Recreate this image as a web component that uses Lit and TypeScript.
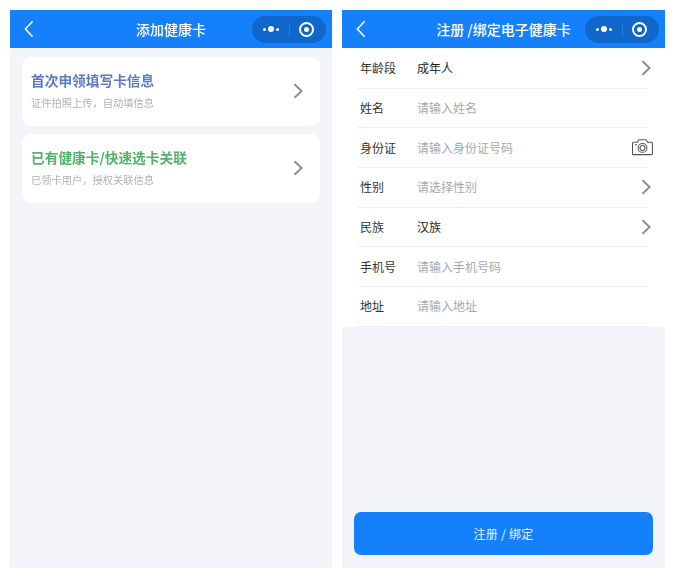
import { LitElement, html, css, svg } from "lit";
import { customElement } from "lit/decorators.js";

const chevron = (cls: string) => html`<svg class=${cls} viewBox="0 0 10 16" fill="none"><path d="M1.5 1.2 8.6 8 1.5 14.8" stroke="currentColor" stroke-width="1.9"/></svg>`;

const camera = html`<svg class="camera" viewBox="0 0 22 18" fill="none" stroke="#555" stroke-width="1.1">
  <path d="M1.5 4h4l1.6-2.6h7.6L16.4 4h4a1 1 0 0 1 1 1v11a1 1 0 0 1-1 1H1.5a1 1 0 0 1-1-1V5a1 1 0 0 1 1-1Z"/>
  <circle cx="11" cy="10" r="4.6"/><circle cx="11" cy="10" r="2.6"/>
  ${svg`<path d="M3 6.5h2"/>`}
</svg>`;

const capsule = html`<div class="capsule">
  <span class="dots"><i></i><i class="big"></i><i></i></span>
  <span class="divider"></span>
  <span class="target"><i></i></span>
</div>`;

const header = (title: string) => html`<header class="bar">
  <svg class="back" viewBox="0 0 10 18" fill="none"><path d="M8.6 1.2 1.4 9l7.2 7.8" stroke="#fff" stroke-width="1.5"/></svg>
  <div class="title">${title}</div>
  ${capsule}
</header>`;

interface Row { label: string; value: string; filled?: boolean; end?: "chevron" | "camera"; }

const rows: Row[] = [
  { label: "年龄段", value: "成年人", filled: true, end: "chevron" },
  { label: "姓名", value: "请输入姓名" },
  { label: "身份证", value: "请输入身份证号码", end: "camera" },
  { label: "性别", value: "请选择性别", end: "chevron" },
  { label: "民族", value: "汉族", filled: true, end: "chevron" },
  { label: "手机号", value: "请输入手机号码" },
  { label: "地址", value: "请输入地址" },
];

@customElement("app-root")
export class AppRoot extends LitElement {
  static styles = css`
    :host {
      display: block;
      width: 675px;
      height: 578px;
      background: #fff;
      font-family: "Noto Sans CJK SC", "Liberation Sans", sans-serif;
    }
    .page {
      display: flex;
      gap: 10px;
      padding: 10px;
      box-sizing: border-box;
      height: 578px;
      filter: blur(0.4px);
    }
    .phone {
      width: 322px;
      flex: none;
      display: flex;
      flex-direction: column;
      background: #f3f5fa;
    }
    .phone.right { width: 323px; }
    .bar {
      height: 38px;
      flex: none;
      background: #1580fb;
      display: grid;
      grid-template-columns: 1fr auto 1fr;
      align-items: center;
      padding: 0 6px 0 14px;
    }
    .back { width: 10px; height: 18px; }
    .title {
      color: #fff;
      font-size: 14px;
      font-weight: 500;
      white-space: nowrap;
      transform: translateX(-4px);
    }
    .capsule {
      width: 74px;
      height: 27px;
      border-radius: 14px;
      background: #0f66cb;
      display: flex;
      align-items: center;
      justify-self: end;
    }
    .dots { display: flex; align-items: center; gap: 2px; width: 37px; justify-content: center; padding-left: 1px; box-sizing: border-box; }
    .dots i { width: 3px; height: 3px; border-radius: 50%; background: #fff; }
    .dots i.big { width: 6px; height: 6px; }
    .divider { width: 1px; height: 15px; background: #2a78d6; }
    .target {
      width: 33px;
      display: flex;
      justify-content: center;
    }
    .target i {
      width: 15px;
      height: 15px;
      box-sizing: border-box;
      border: 2px solid #fff;
      border-radius: 50%;
      display: flex;
      align-items: center;
      justify-content: center;
    }
    .target i::after {
      content: "";
      width: 5px;
      height: 5px;
      border-radius: 50%;
      background: #fff;
    }
    .cards {
      display: flex;
      flex-direction: column;
      gap: 8px;
      padding: 9px 12px;
    }
    .card {
      height: 69px;
      background: #fff;
      border-radius: 9px;
      display: flex;
      align-items: center;
      justify-content: space-between;
      padding: 0 17px 0 9px;
    }
    .card > div { transform: translateY(-1px); }
    .card h3 {
      margin: 0 0 7px;
      font-size: 13.7px;
      line-height: 18px;
      font-weight: 700;
    }
    .card p {
      margin: 0;
      font-size: 10.25px;
      line-height: 14px;
      color: #b2b2b2;
    }
    .blue { color: #5b79c4; }
    .green { color: #50b368; }
    .card .chev { width: 10px; height: 16px; color: #8c8c8c; transform: translateY(-1px); }
    .form {
      background: #fff;
      padding: 1px 17px 0 16px;
    }
    .row {
      height: 39.7px;
      box-sizing: border-box;
      border-bottom: 1px solid #ececec;
      display: flex;
      align-items: center;
      padding-bottom: 1px;
      font-size: 12px;
    }
    .label { width: 59px; flex: none; padding-left: 2px; color: #333; box-sizing: border-box; }
    .value { flex: 1; color: #a8a8a8; }
    .value.filled { color: #1d1d1d; }
    .row .chev { width: 10px; height: 16px; color: #8c8c8c; margin-right: -3px; }
    .camera { width: 21px; height: 18px; margin-right: -5px; }
    .spacer { flex: 1; }
    .foot { padding: 0 12px 13px; }
    .submit {
      height: 43px;
      border-radius: 7px;
      background: #1580fb;
      color: #e8f2ff;
      display: flex;
      align-items: center;
      justify-content: center;
      font-size: 12px;
      letter-spacing: 0.3px;
      white-space: pre;
    }
  `;

  render() {
    return html`<div class="page">
      <section class="phone">
        ${header("添加健康卡")}
        <div class="cards">
          <div class="card">
            <div><h3 class="blue">首次申领填写卡信息</h3><p>证件拍照上传，自动填信息</p></div>
            ${chevron("chev")}
          </div>
          <div class="card">
            <div><h3 class="green">已有健康卡/快速选卡关联</h3><p>已领卡用户，授权关联信息</p></div>
            ${chevron("chev")}
          </div>
        </div>
      </section>
      <section class="phone right">
        ${header("注册 /绑定电子健康卡")}
        <div class="form">
          ${rows.map(
            (r) => html`<div class="row">
              <span class="label">${r.label}</span>
              <span class="value ${r.filled ? "filled" : ""}">${r.value}</span>
              ${r.end === "chevron" ? chevron("chev") : r.end === "camera" ? camera : ""}
            </div>`
          )}
        </div>
        <div class="spacer"></div>
        <div class="foot"><div class="submit">注册 / 绑定</div></div>
      </section>
    </div>`;
  }
}
